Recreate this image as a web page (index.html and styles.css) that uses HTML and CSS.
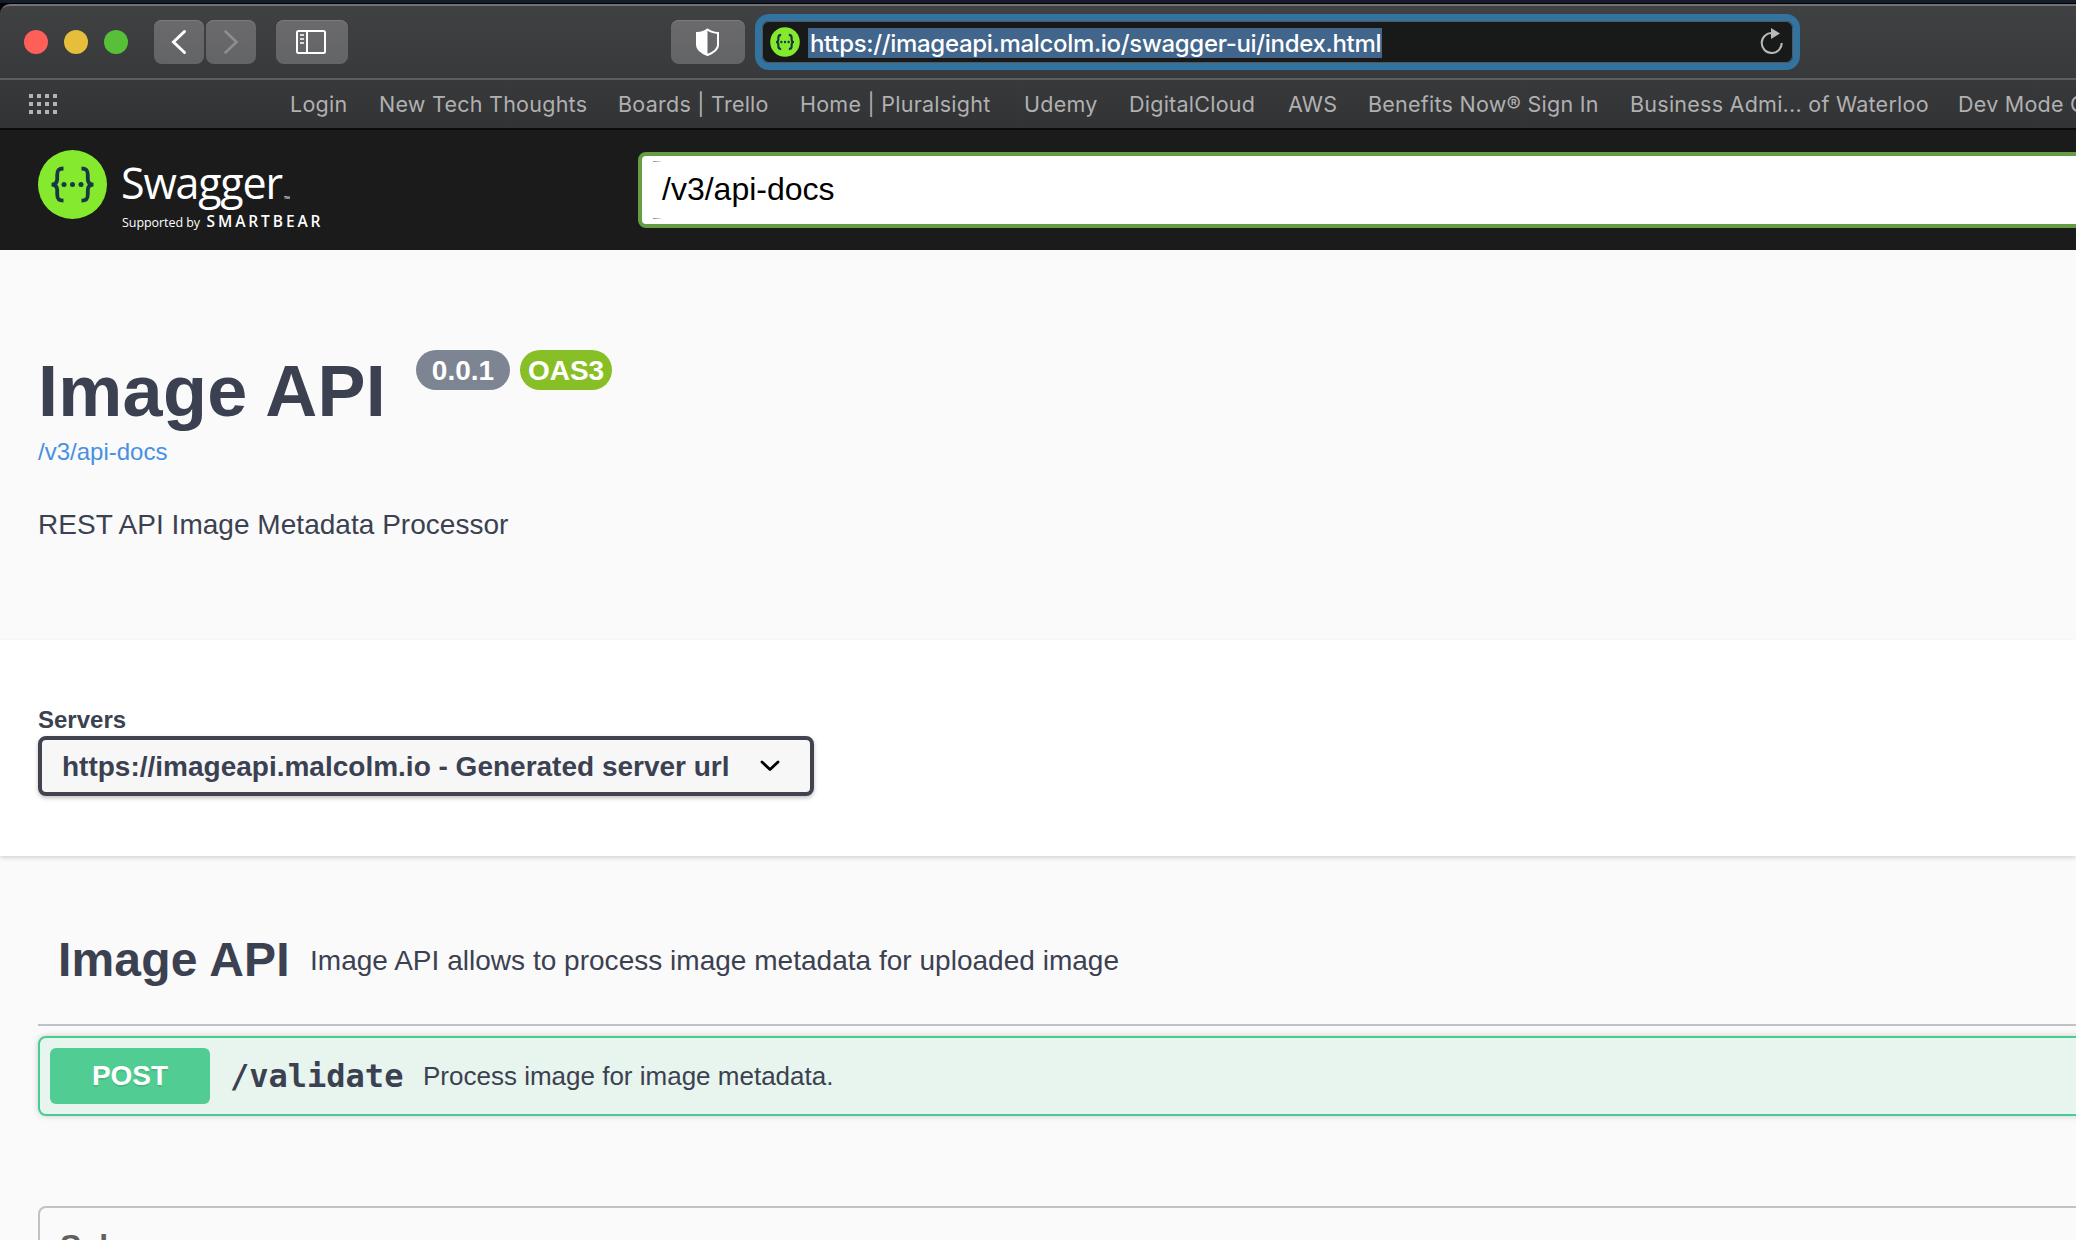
FILE: index.html
```html
<!DOCTYPE html>
<html lang="en">
<head>
<meta charset="utf-8">
<title>Swagger UI</title>
<link rel="stylesheet" href="styles.css">
</head>
<body>
<div class="browser">
  <div class="toolbar">
    <div class="lights"><span class="light red"></span><span class="light yellow"></span><span class="light green"></span></div>
    <div class="nav">
      <button class="tool"><svg width="50" height="44" viewBox="0 0 50 44"><path d="M30.500 11.500 19.500 22l11 10.500" fill="none" stroke="#fff" stroke-width="3" stroke-linecap="round"/></svg></button>
      <button class="tool"><svg width="50" height="44" viewBox="0 0 50 44"><path d="M19.500 11.500 30.500 22l-11 10.500" fill="none" stroke="#8e8e90" stroke-width="2.600" stroke-linecap="round"/></svg></button>
    </div>
    <button class="tool sidebar"><svg width="72" height="44" viewBox="0 0 72 44"><rect x="21" y="11" width="28" height="22" rx="1.500" fill="none" stroke="#fff" stroke-width="2"/><path d="M31 11v22" stroke="#fff" stroke-width="2"/><path d="M24 15h4M24 19h4M24 23h4" stroke="#dadada" stroke-width="2"/></svg></button>
    <button class="tool shield"><svg width="74" height="44" viewBox="0 0 74 44"><path d="M36.500 9.500C33.500 11.800 30 12.700 26 13v12c0 4.500 5 7.800 10.500 10C42 32.800 47 29.500 47 25V13c-4-.3-7.500-1.200-10.500-3.500Z" fill="none" stroke="#fff" stroke-width="2"/><path d="M36.500 9.500C33.500 11.800 30 12.700 26 13v12c0 4.500 5 7.800 10.500 10Z" fill="#fff"/></svg></button>
    <div class="address">
      <svg class="favicon" width="30" height="30" viewBox="0 0 70 70"><circle cx="35" cy="35" r="34.500" fill="#85ea2d"/><g fill="none" stroke="#173647" stroke-width="5"><path d="M26 18.500c-5 0-6.500 2-6.500 6.500v4c0 4-1.500 6-5.500 6 4 0 5.500 2 5.500 6v4c0 4.500 1.500 6.500 6.500 6.500M44 18.500c5 0 6.500 2 6.500 6.500v4c0 4 1.500 6 5.500 6-4 0-5.500 2-5.500 6v4c0 4.500-1.500 6.500-6.500 6.500"/></g><g fill="#173647"><circle cx="26.500" cy="35" r="2.800"/><circle cx="35" cy="35" r="2.800"/><circle cx="43.500" cy="35" r="2.800"/></g></svg>
      <span class="url">https://imageapi.malcolm.io/swagger-ui/index.html</span>
      <svg class="reload" width="26" height="30" viewBox="0 0 26 30"><path d="M22.700 16a10 10 0 1 1-9.700-10" fill="none" stroke="#b9b9b9" stroke-width="2"/><path d="M12 1v11l9-5.500Z" fill="#b9b9b9"/></svg>
    </div>
  </div>
  <div class="bookmarks">
    <svg class="apps" width="28" height="20" viewBox="0 0 28 20"><path d="M0 2h4m4 0h4m4 0h4m4 0h4M0 10h4m4 0h4m4 0h4m4 0h4M0 18h4m4 0h4m4 0h4m4 0h4" stroke="#b4b4b5" stroke-width="4"/></svg>
    <span class="b1">Login</span><span class="b2">New Tech Thoughts</span><span class="b3">Boards | Trello</span><span class="b4">Home | Pluralsight</span><span class="b5">Udemy</span><span class="b6">DigitalCloud</span><span class="b7">AWS</span><span class="b8">Benefits Now® Sign In</span><span class="b9">Business Admi... of Waterloo</span><span class="b10">Dev Mode O</span>
  </div>
</div>

<header class="topbar">
  <svg class="logo" width="300" height="90" viewBox="0 0 300 90">
    <circle cx="34.500" cy="34.500" r="34.500" fill="#85ea2d"/>
    <path d="M25.500 18.500c-5 0-6.300 2-6.300 6.500v4c0 3.700-1.500 5.600-5.700 5.600 4.200 0 5.700 1.900 5.700 5.600v4c0 4.500 1.300 6.500 6.300 6.500M43.500 18.500c5 0 6.300 2 6.300 6.500v4c0 3.700 1.500 5.600 5.700 5.600-4.200 0-5.700 1.900-5.700 5.600v4c0 4.500-1.300 6.500-6.300 6.500" fill="none" stroke="#173647" stroke-width="3.800"/>
    <g fill="#173647"><circle cx="26" cy="34.500" r="2.500"/><circle cx="34.500" cy="34.500" r="2.500"/><circle cx="43" cy="34.500" r="2.500"/></g>
    <text class="wordmark" x="83" y="48.500" textLength="162">Swagger</text>
    <text class="tm" x="246" y="52">™</text>
    <text class="supported" x="84" y="77" textLength="78">Supported by</text>
    <text class="smartbear" x="168.500" y="77" textLength="114">SMARTBEAR</text>
  </svg>
  <div class="spec-url">/v3/api-docs</div>
</header>

<section class="info">
  <div class="title-row">
    <h1>Image API</h1>
    <span class="badge version">0.0.1</span>
    <span class="badge oas">OAS3</span>
  </div>
  <a class="spec-link">/v3/api-docs</a>
  <p class="description">REST API Image Metadata Processor</p>
</section>

<section class="servers">
  <label>Servers</label>
  <div class="select"><span>https://imageapi.malcolm.io - Generated server url</span>
    <svg width="20" height="12" viewBox="0 0 20 12"><path d="M2 2l8 7.500L18 2" fill="none" stroke="#000" stroke-width="2.800" stroke-linecap="round" stroke-linejoin="round"/></svg>
  </div>
</section>

<main class="operations">
  <div class="tag"><h2>Image API</h2><span>Image API allows to process image metadata for uploaded image</span></div>
  <div class="opblock"><span class="method">POST</span><span class="path">/validate</span><span class="summary">Process image for image metadata.</span></div>
  <div class="models">Schemas</div>
</main>
</body>
</html>
```

FILE: styles.css
```css
* { box-sizing: border-box; }
body {
  margin: 0;
  width: 2076px;
  height: 1240px;
  overflow: hidden;
  background: #fafafa;
  color: #3b4151;
  font-family: "Liberation Sans", Arial, sans-serif;
  white-space: nowrap;
}
h1, h2, p { margin: 0; }
svg { display: block; flex: none; }

.browser {
  height: 130px;
  padding-top: 4px;
  background: linear-gradient(#151c2c 0 3px, #000 3px 12px);
  border-bottom: 2px solid #0a0a0a;
  font-family: Inter, sans-serif;
}
.toolbar {
  height: 76px;
  display: flex;
  align-items: center;
  padding-left: 24px;
  border-top: 2px solid #717272;
  border-bottom: 2px solid #5c5d5f;
  border-top-left-radius: 10px;
  background: linear-gradient(#404142, #38393b);
}
.lights { display: flex; gap: 16px; width: 130px; }
.light { width: 24px; height: 24px; border-radius: 50%; }
.red { background: #ff5f59; }
.yellow { background: #e5bf3c; }
.green { background: #58c038; }
.nav { display: flex; gap: 2px; }
.tool {
  width: 50px;
  height: 44px;
  padding: 0;
  border: 0;
  border-radius: 8px;
  background: linear-gradient(#6a6a6c, #636466);
  box-shadow: inset 0 1px #7b7b7d;
}
.sidebar { width: 72px; margin-left: 20px; }
.shield { width: 74px; margin-left: 323px; }
.address {
  display: flex;
  align-items: center;
  width: 1045px;
  height: 56px;
  margin-left: 10px;
  padding: 0 8px;
  border: 7px solid #33739f;
  border-radius: 14px;
  background: #181919;
  box-shadow: inset 0 0 0 1px #53575b;
}
.url {
  height: 30px;
  width: 574px;
  margin: 2px 0 0 8px;
  padding-left: 2px;
  background: #42658c;
  color: #fff;
  font-size: 24px;
  font-weight: 500;
  line-height: 31px;
  letter-spacing: -.32px;
}
.reload { margin-left: auto; }

.bookmarks {
  height: 48px;
  display: flex;
  align-items: center;
  padding-left: 29px;
  background: linear-gradient(#38393b, #323335);
  color: #b0b0b1;
  font-size: 21.5px;
  line-height: 48px;
  letter-spacing: .25px;
}
.bookmarks span { flex: none; }
.apps { margin-right: 233px; }
.b1 { width: 89px; }
.b2 { width: 239px; }
.b3 { width: 182px; }
.b4 { width: 224px; }
.b5 { width: 105px; }
.b6 { width: 159px; }
.b7 { width: 80px; }
.b8 { width: 262px; }
.b9 { width: 328px; }

.topbar {
  height: 120px;
  display: flex;
  padding: 20px 0 0 38px;
  background: #1b1b1b;
}
.logo { margin-right: 300px; }
.logo text { fill: #fff; font-family: "Open Sans", sans-serif; }
.logo .wordmark { font-size: 43px; }
.logo .tm { font-size: 8px; }
.logo .supported { font-size: 12.5px; }
.logo .smartbear { font-size: 15.5px; font-weight: 600; }
.spec-url {
  flex: 1;
  height: 76px;
  margin: 2px -20px 0 0;
  padding: 0 20px;
  border: 4px solid #659d44;
  border-radius: 8px;
  background:
    linear-gradient(90deg, #888, #ddd) 11px 5px / 8px 1px no-repeat,
    linear-gradient(90deg, #888, #ddd) 11px 62px / 8px 1px no-repeat,
    #fff;
  color: #000;
  font-size: 32px;
  line-height: 66px;
}

.info { height: 390px; padding: 96px 38px 0; }
.title-row { display: flex; align-items: flex-start; height: 90px; }
h1 { width: 378px; font-size: 72px; line-height: 90px; letter-spacing: .3px; }
.badge {
  height: 40px;
  margin-top: 4px;
  border-radius: 20px;
  color: #fff;
  font-size: 28px;
  font-weight: 700;
  line-height: 42px;
  text-align: center;
}
.version { width: 94px; background: #7d8492; }
.oas { width: 92px; margin-left: 10px; background: #89bf26; }
.spec-link { display: block; height: 32px; color: #4990e2; font-size: 24px; line-height: 32px; }
.description { margin-top: 40px; font-size: 28px; line-height: 34px; letter-spacing: .03px; }

.servers {
  height: 216px;
  padding: 64px 38px 0;
  background: #fff;
  box-shadow: 0 2px 4px rgba(0, 0, 0, .15);
}
.servers label { display: block; height: 32px; font-size: 24px; font-weight: 700; line-height: 32px; }
.select {
  width: 776px;
  height: 60px;
  display: flex;
  align-items: center;
  justify-content: space-between;
  padding: 0 30px 0 20px;
  border: 4px solid #41444e;
  border-radius: 8px;
  background: #f7f7f7;
  box-shadow: 0 2px 4px rgba(0, 0, 0, .25);
  font-size: 28px;
  font-weight: 700;
}
.select span { padding-top: 2px; }

.operations { padding: 64px 0 0 38px; }
.tag {
  height: 106px;
  display: flex;
  align-items: baseline;
  padding: 10px 0 0 20px;
  border-bottom: 2px solid #c1c2c8;
}
h2 { width: 252px; font-size: 48px; line-height: 60px; letter-spacing: .15px; }
.tag span { font-size: 28px; letter-spacing: .02px; transform: translateY(-6px); }
.opblock {
  height: 80px;
  display: flex;
  align-items: center;
  margin: 10px -10px 0 0;
  padding-left: 10px;
  border: 2px solid #49cc90;
  border-radius: 8px;
  background: #e8f5ee;
  box-shadow: 0 0 6px rgba(0, 0, 0, .19);
}
.method {
  width: 160px;
  height: 56px;
  border-radius: 6px;
  background: #51cc93;
  color: #fff;
  font-size: 28px;
  font-weight: 700;
  line-height: 56px;
  text-align: center;
  text-shadow: 0 2px rgba(0, 0, 0, .1);
}
.path { width: 193px; margin-left: 20px; font: 700 32px "DejaVu Sans Mono", monospace; }
.summary { font-size: 26px; }
.models {
  height: 34px;
  overflow: hidden;
  margin: 90px -10px 0 0;
  padding: 20px 20px 0;
  border: 2px solid #c1c2c8;
  border-bottom: 0;
  border-radius: 8px 8px 0 0;
  color: #606060;
  font-size: 32px;
  font-weight: 700;
  line-height: 36px;
}
```
